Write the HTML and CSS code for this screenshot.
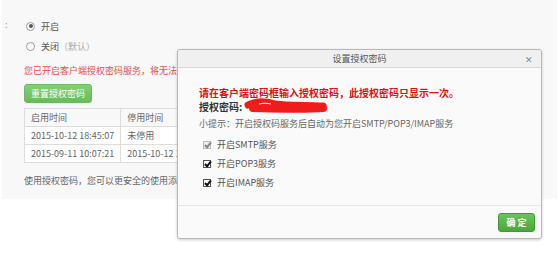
FILE: index.html
```html
<!DOCTYPE html>
<html lang="zh-CN">
<head>
    <meta charset="UTF-8">
    <title>设置授权密码</title>
    <link rel="stylesheet" href="styles.css">
</head>
<body>

    <div class="page">
        <div class="panel">
            <span class="colon">:</span>
            <div class="radio-row"><span class="radio checked"></span>开启</div>
            <div class="radio-row"><span class="radio"></span>关闭<span class="muted">（默认）</span></div>
            <p class="warn">您已开启客户端授权密码服务，将无法使</p>
            <button class="btn-green btn-reset">重置授权密码</button>
            <table class="log">
                <tr><th>启用时间</th><th>停用时间</th></tr>
                <tr><td>2015-10-12 18:45:07</td><td>未停用</td></tr>
                <tr><td>2015-09-11 10:07:21</td><td>2015-10-12 1</td></tr>
            </table>
            <p class="note">使用授权密码，您可以更安全的使用添加</p>
        </div>
    </div>

    <div class="dialog">
        <div class="dialog-head">
            <span class="dialog-title">设置授权密码</span>
            <span class="close">&#10005;</span>
        </div>
        <div class="dialog-body">
            <p class="alert">请在客户端密码框输入授权密码，此授权密码只显示一次。</p>
            <p class="code">授权密码:
                <svg class="scribble" width="86" height="16" viewBox="0 0 86 16">
                    <path d="M5 7 C14 3, 24 3, 32 6 C46 8, 62 7, 80 8" stroke="#f01c1c" stroke-width="7" fill="none" stroke-linecap="round"/>
                    <path d="M10 10 C30 11, 58 11, 80 10" stroke="#f01c1c" stroke-width="8" fill="none" stroke-linecap="round"/>
                    <path d="M16 6 C20 5, 24 5, 28 6" stroke="#fff" stroke-width="1" fill="none"/>
                </svg>
            </p>
            <p class="hint">小提示：开启授权码服务后自动为您开启SMTP/POP3/IMAP服务</p>
            <ul class="services">
                <li><span class="check disabled"></span>开启SMTP服务</li>
                <li><span class="check"></span>开启POP3服务</li>
                <li><span class="check"></span>开启IMAP服务</li>
            </ul>
        </div>
        <div class="dialog-foot">
            <button class="btn-green btn-ok">确 定</button>
        </div>
    </div>

</body>
</html>
```

FILE: styles.css
```css
* {
    margin: 0;
    padding: 0;
    box-sizing: border-box;
}

body {
    width: 558px;
    height: 256px;
    background: #fff;
    font-family: "Noto Sans CJK SC", "Noto Sans", sans-serif;
    font-size: 9px;
    color: #555;
    overflow: hidden;
}

.page {
    margin-left: 2px;
    width: 555px;
    height: 199px;
    background: #f8f8f8;
    overflow: hidden;
}

/* the part that the dialog does not cover */
.panel {
    position: relative;
    width: 175px;
    overflow: hidden;
    padding: 16px 0 0 22px;
    white-space: nowrap;
}

.colon {
    position: absolute;
    left: 3px;
    top: 18px;
    color: #999;
}

.radio-row {
    display: flex;
    align-items: center;
    height: 20px;
    padding-left: 2px;
    color: #555;
}

.radio {
    width: 9px;
    height: 9px;
    border: 1px solid #999;
    border-radius: 50%;
    margin-right: 6px;
    background: #fff;
    display: flex;
    align-items: center;
    justify-content: center;
}

.radio.checked::after {
    content: "";
    width: 4px;
    height: 4px;
    border-radius: 50%;
    background: #555;
}

.muted { color: #aaa; }

.warn {
    color: #e84c4c;
    height: 14px;
    line-height: 14px;
    margin-top: 8px;
}

.btn-green {
    border: 1px solid #3f9a34;
    border-radius: 3px;
    background: linear-gradient(#6cc35d, #49a83b);
    color: #fff;
    font-family: inherit;
    cursor: pointer;
}

.btn-reset {
    display: block;
    margin-top: 6px;
    width: 68px;
    height: 19px;
    font-size: 9px;
    border-color: #6dbb60;
    background: linear-gradient(#84cf77, #68bb59);
}

.log {
    margin-top: 5px;
    border-collapse: collapse;
    background: #fff;
}

.log th, .log td {
    border: 1px solid #ddd;
    height: 18px;
    padding: 0 6px;
    text-align: left;
    font-weight: normal;
    color: #666;
}

.log th:first-child, .log td:first-child { width: 94px; }
.log th:last-child, .log td:last-child { width: 94px; }
.log th { background: #f8f8f8; }

.note {
    margin-top: 11px;
    color: #666;
}

.dialog {
    position: absolute;
    left: 177px;
    top: 49px;
    width: 365px;
    height: 190px;
    border: 1px solid #b8b8b8;
    border-radius: 3px;
    background: #fafafa;
    box-shadow: 0 1px 3px rgba(0, 0, 0, 0.2);
    display: flex;
    flex-direction: column;
}

.dialog-head {
    position: relative;
    height: 18px;
    background: #f0f0f0;
    border-bottom: 1px solid #d8d8d8;
    border-radius: 3px 3px 0 0;
    display: flex;
    align-items: center;
    justify-content: center;
}

.dialog-title { color: #555; }

.close {
    position: absolute;
    right: 8px;
    top: 3px;
    color: #888;
    font-size: 9px;
}

.dialog-body {
    flex: 1;
    padding: 18px 0 0 21px;
    white-space: nowrap;
}

.alert {
    color: #d8140f;
    font-size: 10px;
    font-weight: bold;
    line-height: 14px;
}

.code {
    display: flex;
    align-items: center;
    color: #333;
    font-size: 10px;
    font-weight: bold;
    line-height: 14px;
}

.scribble { margin-left: 1px; margin-top: -2px; }

.hint {
    margin-top: 3px;
    line-height: 13px;
    color: #666;
}

.services {
    list-style: none;
    margin-top: 5px;
}

.services li {
    display: flex;
    align-items: center;
    height: 19px;
    padding-left: 4px;
    color: #555;
}

.check {
    position: relative;
    width: 8px;
    height: 8px;
    border: 1px solid #555;
    background: #fff;
    margin-right: 6px;
}

.check::after {
    content: "";
    position: absolute;
    left: 2px;
    top: -1px;
    width: 2px;
    height: 5px;
    border: solid #111;
    border-width: 0 2px 2px 0;
    transform: rotate(40deg);
}

.check.disabled { border-color: #bbb; background: #eee; }
.check.disabled::after { border-color: #888; }

.dialog-foot {
    height: 33px;
    border-top: 1px solid #e6e6e6;
    display: flex;
    justify-content: flex-end;
    align-items: center;
    padding-right: 6px;
}

.btn-ok {
    width: 37px;
    height: 19px;
    font-size: 9px;
    font-weight: bold;
}
```
